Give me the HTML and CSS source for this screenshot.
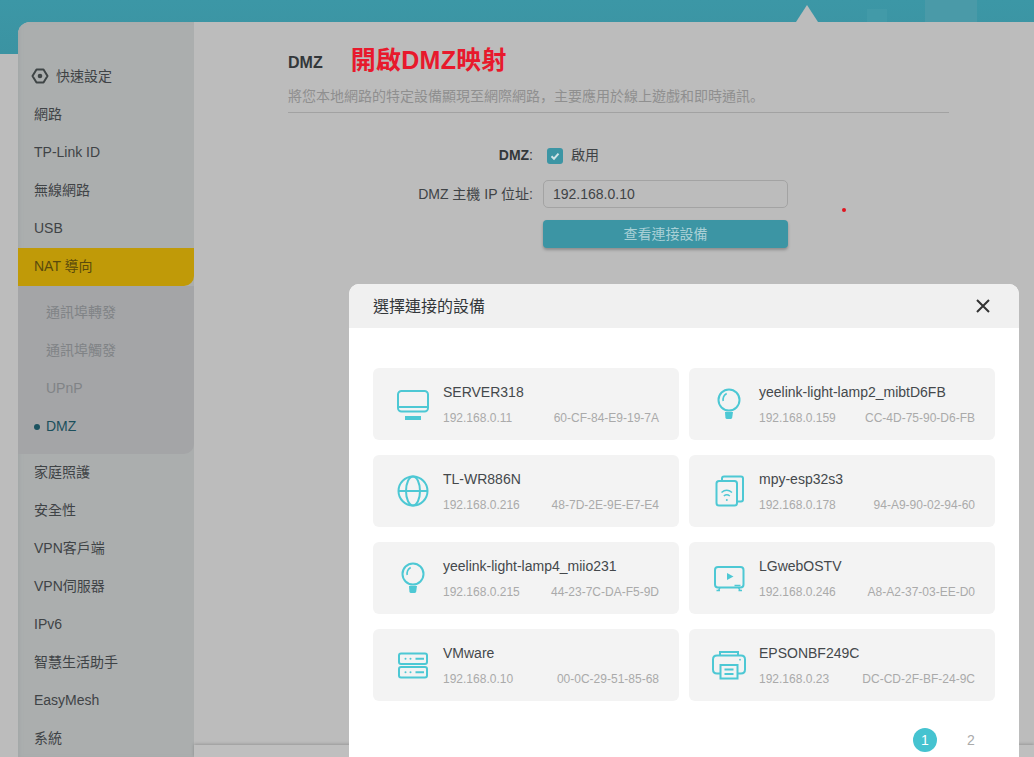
FILE: index.html
```html
<!DOCTYPE html>
<html lang="zh-Hant">
<head>
    <meta charset="UTF-8">
    <meta name="viewport" content="width=device-width, initial-scale=1.0">
    <title>DMZ</title>
    <link rel="stylesheet" href="styles.css">
</head>
<body>
    <header class="topbar">
        <span class="topbar-mark topbar-mark-small"></span>
        <span class="topbar-mark topbar-mark-wide"></span>
        <span class="topbar-arrow"></span>
    </header>

    <div class="panel">
        <nav class="sidebar">
            <a class="nav-item nav-quick">
                <svg class="nav-gear" viewBox="0 0 18 18" width="18" height="18">
                    <path d="M5.500 2.500h7L16.500 9l-4 6.500h-7L1.500 9z" fill="none" stroke="#3f4546" stroke-width="2" stroke-linejoin="round"/>
                    <circle cx="9" cy="9" r="2.300" fill="#3f4546"/>
                </svg>
                快速設定
            </a>
            <a class="nav-item">網路</a>
            <a class="nav-item">TP-Link ID</a>
            <a class="nav-item">無線網路</a>
            <a class="nav-item">USB</a>
            <a class="nav-item nav-active">NAT 導向</a>
            <div class="subnav">
                <a class="nav-item subnav-item">通訊埠轉發</a>
                <a class="nav-item subnav-item">通訊埠觸發</a>
                <a class="nav-item subnav-item">UPnP</a>
                <a class="nav-item subnav-item subnav-current">DMZ</a>
            </div>
            <a class="nav-item">家庭照護</a>
            <a class="nav-item">安全性</a>
            <a class="nav-item">VPN客戶端</a>
            <a class="nav-item">VPN伺服器</a>
            <a class="nav-item">IPv6</a>
            <a class="nav-item">智慧生活助手</a>
            <a class="nav-item">EasyMesh</a>
            <a class="nav-item">系統</a>
        </nav>

        <main class="content">
            <div class="section">
                <div class="title-row">
                    <h1 class="title">DMZ</h1>
                    <span class="note">開啟DMZ映射</span>
                </div>
                <p class="subtitle">將您本地網路的特定設備顯現至網際網路<span class="punct" lang="ja">，</span>主要應用於線上遊戲和即時通訊<span class="punct" lang="ja">。</span></p>

                <form class="form">
                    <label class="form-label form-label-bold">DMZ<span class="colon">:</span></label>
                    <div class="check-row">
                        <span class="checkbox">
                            <svg viewBox="0 0 16 16" width="16" height="16"><path d="M4.500 8.200l2.500 2.500 4.500-5" fill="none" stroke="#cfe3e6" stroke-width="2"/></svg>
                        </span>
                        <span class="check-text">啟用</span>
                    </div>
                    <label class="form-label">DMZ 主機 IP 位址:</label>
                    <input class="text-input" type="text" value="192.168.0.10">
                    <span></span>
                    <button class="view-btn" type="button">查看連接設備</button>
                </form>
            </div>
            <div class="footer-bar"></div>
        </main>
    </div>

    <span class="red-dot"></span>

    <div class="modal">
        <div class="modal-head">
            <span class="modal-title">選擇連接的設備</span>
            <svg class="modal-close" viewBox="0 0 14 14" width="14" height="14"><path d="M1 1l12 12M13 1L1 13" stroke="#333" stroke-width="2"/></svg>
        </div>
        <div class="modal-body">
            <div class="device-grid">
                <div class="device">
                    <svg class="device-icon" viewBox="0 0 40 40">
                        <rect x="5" y="7" width="30" height="20.500" rx="3.500"/>
                        <path d="M5 23h30"/>
                        <rect class="solid" x="12" y="32" width="16" height="4"/>
                    </svg>
                    <div class="device-info">
                        <div class="device-name">SERVER318</div>
                        <div class="device-meta"><span>192.168.0.11</span><span>60-CF-84-E9-19-7A</span></div>
                    </div>
                </div>
                <div class="device">
                    <svg class="device-icon" viewBox="0 0 40 40">
                        <circle cx="20" cy="16" r="10.500"/>
                        <path d="M14.200 17c-.5-3 1-6 3.500-7.500" stroke-width="1.600"/>
                        <path class="solid" d="M16 28h8l-.8 5.500q-.3 1.500-1.700 1.500h-3.500q-1.400 0-1.600-1.500z"/>
                    </svg>
                    <div class="device-info">
                        <div class="device-name">yeelink-light-lamp2_mibtD6FB</div>
                        <div class="device-meta"><span>192.168.0.159</span><span>CC-4D-75-90-D6-FB</span></div>
                    </div>
                </div>
                <div class="device">
                    <svg class="device-icon" viewBox="0 0 40 40">
                        <circle cx="20" cy="20" r="14.500"/>
                        <ellipse cx="20" cy="20" rx="7" ry="14.500"/>
                        <path d="M5.500 20h29"/>
                    </svg>
                    <div class="device-info">
                        <div class="device-name">TL-WR886N</div>
                        <div class="device-meta"><span>192.168.0.216</span><span>48-7D-2E-9E-E7-E4</span></div>
                    </div>
                </div>
                <div class="device">
                    <svg class="device-icon" viewBox="0 0 40 40">
                        <path d="M13 9.500V7.500q0-2 2-2h17q2 0 2 2v21q0 2-2 2h-4"/>
                        <rect x="7.500" y="10" width="20.500" height="24.500" rx="2.500"/>
                        <path d="M12.500 21.500q5.200-4.500 10.500 0M14.800 25q3-2.500 6 0" stroke-width="1.500"/>
                        <circle class="solid" cx="17.800" cy="29" r="1"/>
                    </svg>
                    <div class="device-info">
                        <div class="device-name">mpy-esp32s3</div>
                        <div class="device-meta"><span>192.168.0.178</span><span>94-A9-90-02-94-60</span></div>
                    </div>
                </div>
                <div class="device">
                    <svg class="device-icon" viewBox="0 0 40 40">
                        <circle cx="20" cy="16" r="10.500"/>
                        <path d="M14.200 17c-.5-3 1-6 3.500-7.500" stroke-width="1.600"/>
                        <path class="solid" d="M16 28h8l-.8 5.500q-.3 1.500-1.700 1.500h-3.500q-1.400 0-1.600-1.500z"/>
                    </svg>
                    <div class="device-info">
                        <div class="device-name">yeelink-light-lamp4_miio231</div>
                        <div class="device-meta"><span>192.168.0.215</span><span>44-23-7C-DA-F5-9D</span></div>
                    </div>
                </div>
                <div class="device">
                    <svg class="device-icon" viewBox="0 0 40 40">
                        <rect x="6" y="9" width="28.500" height="20.500" rx="3"/>
                        <path class="solid" d="M18 15l6.500 3.500-6.500 3.500z"/>
                        <path d="M11 29.500l-1.500 3M29.500 29.500l1.500 3M7.500 32.500h3.500M29.500 32.500h3.500" stroke-width="1.500"/>
                        <path d="M25.500 27.500h6" stroke-width="1.500"/>
                    </svg>
                    <div class="device-info">
                        <div class="device-name">LGwebOSTV</div>
                        <div class="device-meta"><span>192.168.0.246</span><span>A8-A2-37-03-EE-D0</span></div>
                    </div>
                </div>
                <div class="device">
                    <svg class="device-icon" viewBox="0 0 40 40">
                        <rect x="6" y="8.500" width="28" height="10.500" rx="2"/>
                        <rect x="6" y="22" width="28" height="10.500" rx="2"/>
                        <path d="M22.500 13.800h8.500M22.500 27.200h8.500"/>
                        <circle class="solid" cx="12.500" cy="13.800" r="1"/>
                        <circle class="solid" cx="17.500" cy="13.800" r="1"/>
                        <circle class="solid" cx="12.500" cy="27.200" r="1"/>
                        <circle class="solid" cx="17.500" cy="27.200" r="1"/>
                    </svg>
                    <div class="device-info">
                        <div class="device-name">VMware</div>
                        <div class="device-meta"><span>192.168.0.10</span><span>00-0C-29-51-85-68</span></div>
                    </div>
                </div>
                <div class="device">
                    <svg class="device-icon" viewBox="0 0 40 40">
                        <path d="M11 10.500V7h18v3.500"/>
                        <path d="M11 28.500H8q-4 0-4-4V14.500q0-4 4-4h24q4 0 4 4v10q0 4-4 4h-3"/>
                        <rect x="11.500" y="20" width="17" height="13.500"/>
                        <path d="M15.500 24.500h9M15.500 29h9"/>
                        <circle class="solid" cx="31" cy="14.700" r=".9"/>
                    </svg>
                    <div class="device-info">
                        <div class="device-name">EPSONBF249C</div>
                        <div class="device-meta"><span>192.168.0.23</span><span>DC-CD-2F-BF-24-9C</span></div>
                    </div>
                </div>
            </div>
            <div class="pager">
                <span class="page page-current">1</span>
                <span class="page">2</span>
            </div>
        </div>
    </div>
</body>
</html>
```

FILE: styles.css
```css
* {
    box-sizing: border-box;
}

body {
    margin: 0;
    height: 757px;
    overflow: hidden;
    position: relative;
    background-color: #bcbcbc;
    font-family: "Liberation Sans", "Noto Sans CJK TC", sans-serif;
    font-size: 14px;
    line-height: 20px;
    color: #3f4346;
}

/* top band */
.topbar {
    height: 54px;
    position: relative;
    background: linear-gradient(#3c97a6, #3b93a2);
}

.topbar-mark {
    position: absolute;
}

.topbar-mark-small {
    left: 867px;
    top: 9px;
    width: 20px;
    height: 13px;
    background-color: #429aa8;
}

.topbar-mark-wide {
    left: 925px;
    top: 0;
    width: 52px;
    height: 22px;
    background-color: #4a9aa8;
}

.topbar-arrow {
    position: absolute;
    left: 796px;
    top: 5px;
    width: 0;
    height: 0;
    border-left: 11px solid transparent;
    border-right: 11px solid transparent;
    border-bottom: 17px solid #bcbcbc;
}

/* main panel */
.panel {
    display: flex;
    height: 735px;
    margin-top: -32px;
    margin-left: 18px;
    position: relative;
    background-color: #bcbcbc;
    border-top-left-radius: 12px;
    overflow: hidden;
}

.sidebar {
    width: 176px;
    flex-shrink: 0;
    padding-top: 36px;
    background-color: #abaeae;
    box-shadow: inset 3px 0 4px -2px #a0a5a6;
}

.nav-item {
    display: flex;
    align-items: center;
    height: 38px;
    padding-left: 16px;
    padding-bottom: 2px;
    color: #3f4346;
}

.nav-quick {
    gap: 7px;
    padding-left: 13px;
}

.nav-gear {
    flex-shrink: 0;
}

.nav-active {
    background-color: #c09a08;
    color: #5a4a0c;
    border-bottom-right-radius: 10px;
}

.subnav {
    padding: 8px 0;
    background-color: #a4a5a7;
    border-bottom-right-radius: 10px;
}

.subnav-item {
    padding-left: 28px;
    color: #808386;
}

.subnav-current {
    position: relative;
    color: #1c4f5c;
}

.subnav-current::before {
    content: "";
    position: absolute;
    left: 16px;
    top: 16px;
    width: 6px;
    height: 6px;
    border-radius: 50%;
    background-color: #1c5360;
}

.content {
    flex: 1;
    display: flex;
    flex-direction: column;
}

.section {
    flex: 1;
    width: 755px;
    padding: 25px 0 0 94px;
}

.title-row {
    display: flex;
    align-items: center;
    gap: 28px;
    height: 30px;
}

.title {
    margin: 2px 0 0;
    font-size: 16px;
    font-weight: bold;
    color: #33373a;
}

.note {
    margin-bottom: 4px;
    font-size: 25px;
    font-weight: bold;
    color: #e8192c;
    letter-spacing: 0.3px;
}

.subtitle {
    margin: 8px 0 0;
    padding-bottom: 6px;
    color: #8f8f8f;
    border-bottom: 1px solid #a2a2a2;
}

.punct {
    font-family: "Noto Sans CJK JP", sans-serif;
}

.form {
    display: grid;
    grid-template-columns: 245px 245px;
    column-gap: 10px;
    row-gap: 12px;
    margin-top: 31px;
    align-items: center;
}

.form-label {
    text-align: right;
    color: #3f4346;
}

.form-label-bold {
    padding-bottom: 2px;
    font-weight: bold;
    color: #33373a;
}

.colon {
    font-weight: normal;
}

.check-row {
    display: flex;
    align-items: center;
    gap: 8px;
    height: 24px;
    padding-left: 4px;
}

.check-text {
    margin-bottom: 2px;
}

.checkbox {
    display: block;
    width: 16px;
    height: 16px;
    border-radius: 3px;
    background-color: #3c95a4;
}

.checkbox svg {
    display: block;
}

.text-input {
    height: 28px;
    width: 245px;
    padding: 0 9px;
    border: 1px solid #a3a3a3;
    border-radius: 5px;
    background: transparent;
    font: inherit;
    color: #3f4346;
}

.view-btn {
    height: 28px;
    width: 245px;
    padding-bottom: 2px;
    border: none;
    border-radius: 4px;
    background-color: #3c95a4;
    color: #a9d0d6;
    font: inherit;
    box-shadow: 0 2px 3px rgba(0, 0, 0, 0.25);
}

.footer-bar {
    height: 12px;
    flex-shrink: 0;
    background-color: #bfbfbf;
    box-shadow: 0 -1px 3px rgba(0, 0, 0, 0.2);
}

.red-dot {
    position: absolute;
    left: 842px;
    top: 208px;
    width: 4px;
    height: 4px;
    border-radius: 50%;
    background-color: #e0141e;
}

/* device picker */
.modal {
    position: absolute;
    left: 349px;
    top: 284px;
    width: 670px;
    height: 473px;
    overflow: hidden;
    background-color: #fff;
    border-radius: 10px 10px 0 0;
}

.modal-head {
    display: flex;
    align-items: center;
    justify-content: space-between;
    height: 44px;
    padding: 0 29px 0 24px;
    background-color: #f0f0f0;
}

.modal-title {
    margin-top: 2px;
    font-size: 16px;
    color: #33373a;
}

.modal-body {
    padding: 40px 24px 0;
}

.device-grid {
    display: grid;
    grid-template-columns: 306px 306px;
    grid-auto-rows: 72px;
    column-gap: 10px;
    row-gap: 15px;
}

.device {
    display: flex;
    align-items: center;
    gap: 10px;
    padding: 0 20px;
    background-color: #f3f3f3;
    border-radius: 6px;
}

.device-icon {
    width: 40px;
    height: 40px;
    flex-shrink: 0;
    fill: none;
    stroke: #4dc8d4;
    stroke-width: 2;
}

.device-icon .solid {
    fill: #4dc8d4;
    stroke: none;
}

.device-info {
    flex: 1;
}

.device-name {
    color: #44484b;
}

.device-meta {
    display: flex;
    justify-content: space-between;
    margin-top: 8px;
    line-height: 16px;
    font-size: 12px;
    color: #aaa;
}

.pager {
    display: flex;
    justify-content: flex-end;
    gap: 22px;
    margin-top: 27px;
    padding-right: 12px;
}

.page {
    width: 24px;
    height: 24px;
    line-height: 24px;
    border-radius: 50%;
    text-align: center;
    color: #aaa;
}

.page-current {
    background-color: #45c3d0;
    color: #fff;
}
```
